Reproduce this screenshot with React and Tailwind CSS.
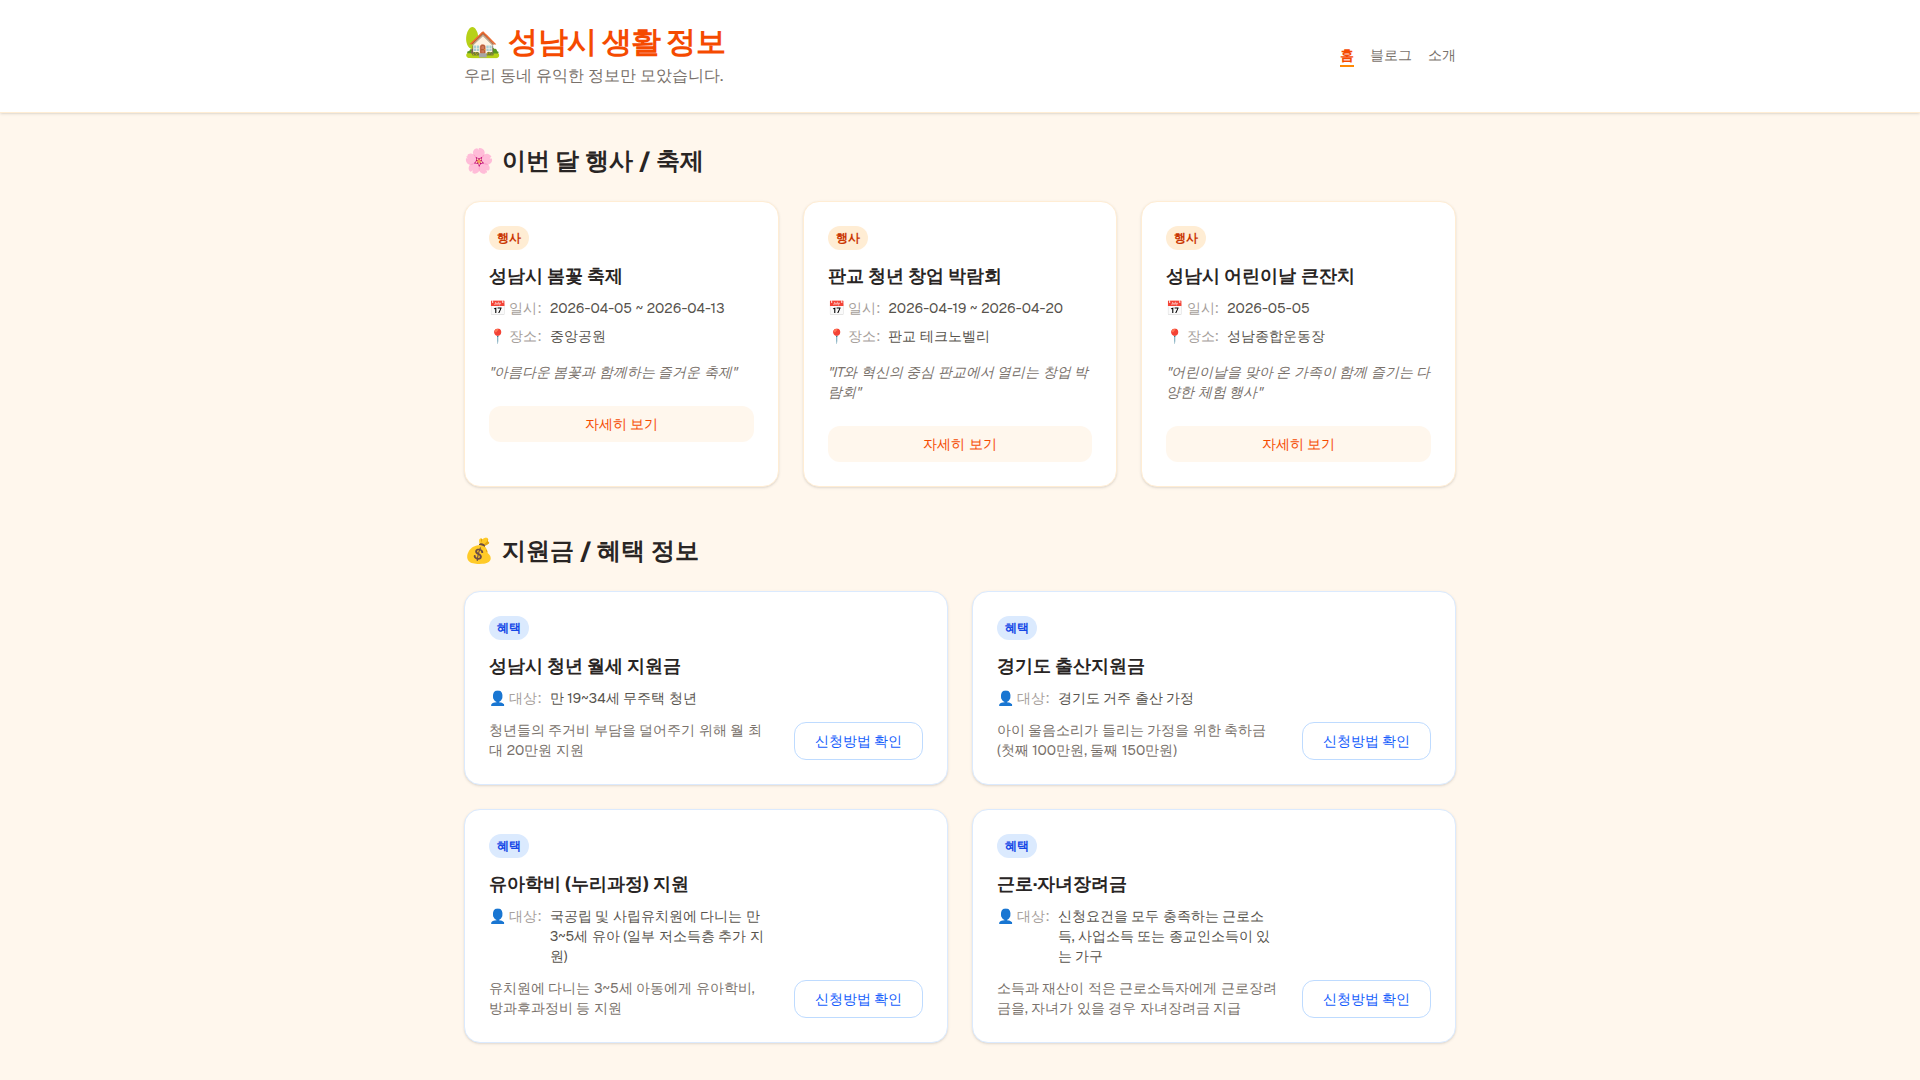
const events = [
  { title: '성남시 봄꽃 축제', date: '2026-04-05 ~ 2026-04-13', place: '중앙공원', summary: '아름다운 봄꽃과 함께하는 즐거운 축제' },
  { title: '판교 청년 창업 박람회', date: '2026-04-19 ~ 2026-04-20', place: '판교 테크노벨리', summary: 'IT와 혁신의 중심 판교에서 열리는 창업 박람회' },
  { title: '성남시 어린이날 큰잔치', date: '2026-05-05', place: '성남종합운동장', summary: '어린이날을 맞아 온 가족이 함께 즐기는 다양한 체험 행사' },
];

const benefits = [
  { title: '성남시 청년 월세 지원금', target: '만 19~34세 무주택 청년', summary: '청년들의 주거비 부담을 덜어주기 위해 월 최대 20만원 지원' },
  { title: '경기도 출산지원금', target: '경기도 거주 출산 가정', summary: '아이 울음소리가 들리는 가정을 위한 축하금 (첫째 100만원, 둘째 150만원)' },
  { title: '유아학비 (누리과정) 지원', target: '국공립 및 사립유치원에 다니는 만 3~5세 유아 (일부 저소득층 추가 지원)', summary: '유치원에 다니는 3~5세 아동에게 유아학비, 방과후과정비 등 지원' },
  { title: '근로·자녀장려금', target: '신청요건을 모두 충족하는 근로소득, 사업소득 또는 종교인소득이 있는 가구', summary: '소득과 재산이 적은 근로소득자에게 근로장려금을, 자녀가 있을 경우 자녀장려금 지급' },
];

function InfoRow({ label, children }) {
  return (
    <div className="flex gap-2">
      <dt className="shrink-0 text-stone-400">{label}</dt>
      <dd>{children}</dd>
    </div>
  );
}

function SectionTitle({ icon, children }) {
  return (
    <h2 className="mb-6 flex items-center gap-2 text-2xl font-bold text-stone-800">
      <span>{icon}</span> {children}
    </h2>
  );
}

function EventCard({ event }) {
  return (
    <article className="rounded-2xl border border-orange-100 bg-white p-6 shadow-sm">
      <div className="mb-3 flex">
        <span className="rounded-full bg-orange-100 px-2 py-1 text-xs font-bold text-orange-700">행사</span>
      </div>
      <h3 className="mb-2 text-lg font-bold text-stone-800">{event.title}</h3>
      <dl className="space-y-2 text-sm text-stone-600">
        <InfoRow label="📅 일시:">{event.date}</InfoRow>
        <InfoRow label="📍 장소:">{event.place}</InfoRow>
      </dl>
      <p className="mt-4 text-sm text-stone-500 italic">{`"${event.summary}"`}</p>
      <button type="button" className="mt-6 w-full rounded-xl bg-orange-50 py-2 text-sm font-medium text-orange-600 hover:bg-orange-100">
        자세히 보기
      </button>
    </article>
  );
}

function BenefitCard({ benefit }) {
  return (
    <article className="flex items-end justify-between gap-6 rounded-2xl border border-blue-100 bg-white p-6 shadow-sm">
      <div className="flex-1">
        <div className="mb-3 flex">
          <span className="rounded-full bg-blue-100 px-2 py-1 text-xs font-bold text-blue-700">혜택</span>
        </div>
        <h3 className="mb-2 text-lg font-bold text-stone-800">{benefit.title}</h3>
        <dl className="text-sm text-stone-600">
          <InfoRow label="👤 대상:">{benefit.target}</InfoRow>
        </dl>
        <p className="mt-3 text-sm text-stone-500">{benefit.summary}</p>
      </div>
      <button type="button" className="shrink-0 rounded-xl border border-blue-200 bg-white px-5 py-2 text-sm font-medium text-blue-600 hover:bg-blue-50">
        신청방법 확인
      </button>
    </article>
  );
}

export default function App() {
  return (
    <div className="min-h-screen bg-orange-50 font-['Geist',sans-serif] text-stone-800">
      <header className="border-b border-orange-100 bg-white shadow-sm">
        <div className="mx-auto flex max-w-5xl items-center justify-between px-4 py-6">
          <div>
            <h1 className="flex items-center gap-2 text-3xl font-extrabold tracking-tight text-orange-600">
              <span>🏡</span> 성남시 생활 정보
            </h1>
            <p className="mt-1 text-stone-500">우리 동네 유익한 정보만 모았습니다.</p>
          </div>
          <nav className="flex gap-4 text-sm font-medium text-stone-500">
            <a href="#home" aria-current="page" className="border-b-2 border-orange-400 font-bold text-orange-600">홈</a>
            <a href="#blog" className="hover:text-orange-500">블로그</a>
            <a href="#about" className="hover:text-orange-500">소개</a>
          </nav>
        </div>
      </header>
      <main className="mx-auto max-w-5xl space-y-12 px-4 py-8">
        <section>
          <SectionTitle icon="🌸">이번 달 행사 / 축제</SectionTitle>
          <div className="grid gap-6 md:grid-cols-3">
            {events.map((event) => <EventCard key={event.title} event={event} />)}
          </div>
        </section>
        <section>
          <SectionTitle icon="💰">지원금 / 혜택 정보</SectionTitle>
          <div className="grid gap-6 md:grid-cols-2">
            {benefits.map((benefit) => <BenefitCard key={benefit.title} benefit={benefit} />)}
          </div>
        </section>
      </main>
    </div>
  );
}
